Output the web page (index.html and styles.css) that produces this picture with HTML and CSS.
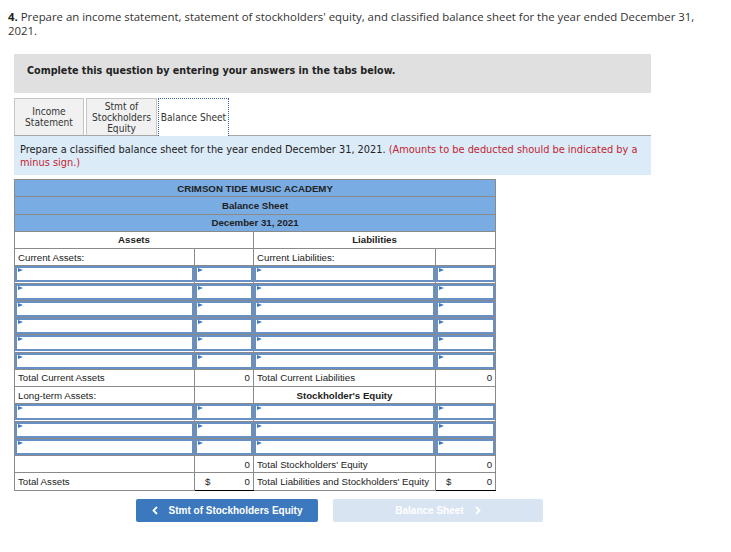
FILE: index.html
```html
<!DOCTYPE html>
<html lang="en">
<head>
<meta charset="utf-8">
<title>Balance Sheet</title>
<link rel="stylesheet" href="styles.css">
</head>
<body>
<p class="question"><b>4.</b> Prepare an income statement, statement of stockholders' equity, and classified balance sheet for the year ended December 31,<br>2021.</p>

<div class="panel">
  <div class="complete">Complete this question by entering your answers in the tabs below.</div>
  <div class="tabs">
    <div class="tab tab-income">Income<br>Statement</div>
    <div class="tab tab-stmt">Stmt of<br>Stockholders<br>Equity</div>
    <div class="tab tab-active">Balance Sheet</div>
  </div>
  <div class="instr">Prepare a classified balance sheet for the year ended December 31, 2021. <span class="red">(Amounts to be deducted should be indicated by a<br>minus sign.)</span></div>
</div>

<table class="bs">
  <colgroup>
    <col class="c1"><col class="c2"><col class="c3"><col class="c4">
  </colgroup>
  <tr class="head"><td colspan="4">CRIMSON TIDE MUSIC ACADEMY</td></tr>
  <tr class="head"><td colspan="4">Balance Sheet</td></tr>
  <tr class="head"><td colspan="4">December 31, 2021</td></tr>
  <tr class="sect"><td colspan="2">Assets</td><td colspan="2">Liabilities</td></tr>
  <tr><td class="lbl">Current Assets:</td><td></td><td class="lbl">Current Liabilities:</td><td></td></tr>
  <tr><td class="in"><input class="field"></td><td class="in"><input class="field"></td><td class="in"><input class="field"></td><td class="in"><input class="field"></td></tr>
  <tr><td class="in"><input class="field"></td><td class="in"><input class="field"></td><td class="in"><input class="field"></td><td class="in"><input class="field"></td></tr>
  <tr><td class="in"><input class="field"></td><td class="in"><input class="field"></td><td class="in"><input class="field"></td><td class="in"><input class="field"></td></tr>
  <tr><td class="in"><input class="field"></td><td class="in"><input class="field"></td><td class="in"><input class="field"></td><td class="in"><input class="field"></td></tr>
  <tr><td class="in"><input class="field"></td><td class="in"><input class="field"></td><td class="in"><input class="field"></td><td class="in"><input class="field"></td></tr>
  <tr><td class="in"><input class="field"></td><td class="in"><input class="field"></td><td class="in"><input class="field"></td><td class="in"><input class="field"></td></tr>
  <tr><td class="lbl">Total Current Assets</td><td class="num sub">0</td><td class="lbl">Total Current Liabilities</td><td class="num sub">0</td></tr>
  <tr><td class="lbl">Long-term Assets:</td><td></td><td class="subhead">Stockholder's Equity</td><td></td></tr>
  <tr><td class="in"><input class="field"></td><td class="in"><input class="field"></td><td class="in"><input class="field"></td><td class="in"><input class="field"></td></tr>
  <tr><td class="in"><input class="field"></td><td class="in"><input class="field"></td><td class="in"><input class="field"></td><td class="in"><input class="field"></td></tr>
  <tr><td class="in"><input class="field"></td><td class="in"><input class="field"></td><td class="in"><input class="field"></td><td class="in"><input class="field"></td></tr>
  <tr><td class="lbl"></td><td class="num sub">0</td><td class="lbl">Total Stockholders' Equity</td><td class="num sub">0</td></tr>
  <tr><td class="lbl">Total Assets</td><td class="num total"><span class="cur">$</span>0</td><td class="lbl">Total Liabilities and Stockholders' Equity</td><td class="num total"><span class="cur">$</span>0</td></tr>
</table>

<div class="nav">
  <div class="btn btn-prev">
    <svg class="chev" width="6" height="9" viewBox="0 0 6 9"><path d="M5 1 L1.5 4.5 L5 8" fill="none" stroke="#fff" stroke-width="1.8"/></svg>
    <span>Stmt of Stockholders Equity</span>
  </div>
  <div class="btn btn-next">
    <span>Balance Sheet</span>
    <svg class="chev" width="6" height="9" viewBox="0 0 6 9"><path d="M1 1 L4.5 4.5 L1 8" fill="none" stroke="#fff" stroke-width="1.8"/></svg>
  </div>
</div>
</body>
</html>
```

FILE: styles.css
```css
body {
  margin: 0;
  background: #fff;
  color: #333;
  font-family: "Open Sans", Lato, sans-serif;
}

.question {
  margin: 0;
  padding: 10px 8px 0;
  font-size: 11.4px;
  line-height: 14px;
  color: #333;
}

.question b {
  color: #222;
}

.panel {
  margin: 16px 0 0 14px;
  width: 637px;
}

.complete {
  box-sizing: border-box;
  height: 39px;
  padding: 10px 0 0 13px;
  background: #e0e0e0;
  font-family: "DejaVu Sans Condensed", "DejaVu Sans", sans-serif;
  font-stretch: condensed;
  font-weight: bold;
  font-size: 10.7px;
  line-height: 13px;
  color: #222;
}

.tabs {
  display: flex;
  height: 37px;
  margin-top: 5px;
}

.tab {
  box-sizing: border-box;
  height: 37px;
  display: flex;
  align-items: center;
  justify-content: center;
  text-align: center;
  border: 1px solid #c6c6c6;
  border-bottom: none;
  background: #f1f1f1;
  font-family: "DejaVu Sans Condensed", "DejaVu Sans", sans-serif;
  font-stretch: condensed;
  font-size: 10.1px;
  line-height: 11px;
  color: #333;
}

.tab-income {
  width: 70px;
  margin-right: 2px;
}

.tab-stmt {
  width: 71px;
  margin-right: 1px;
}

.tab-active {
  width: 71px;
  height: 38px;
  background: #fff;
  border: 1px dotted #2f64b0;
  border-bottom: none;
  position: relative;
  z-index: 1;
}

.instr {
  box-sizing: border-box;
  height: 40px;
  padding: 7px 6px 0;
  background: #dcebf8;
  border-top: 1px solid #a8a8a8;
  font-family: "DejaVu Sans", sans-serif;
  font-size: 9.8px;
  line-height: 13px;
  color: #222;
}

.red {
  color: #c3242f;
}

.bs {
  margin: 4px 0 0 14px;
  width: 481px;
  border-collapse: collapse;
  table-layout: fixed;
  border: 1px solid #8a8a8a;
  font-family: "Liberation Sans", Arial, sans-serif;
  font-size: 9.7px;
  color: #222;
}

.c1 { width: 180px; }
.c2 { width: 59px; }
.c3 { width: 182px; }
.c4 { width: 60px; }

.bs td {
  height: 16.25px;
  padding: 0;
  border: 1px solid #8a8a8a;
  vertical-align: middle;
  white-space: nowrap;
}

.head td {
  background: #79ace2;
  text-align: center;
  font-weight: bold;
}

.sect td,
.bs td.subhead {
  text-align: center;
  font-weight: bold;
}

.bs td.lbl {
  padding-left: 3px;
}

.bs td.num {
  text-align: right;
  padding-right: 3px;
}

.bs td.sub {
  border-top: 1px solid #000;
}

.bs td.total {
  border-bottom: 1px solid #000;
}

.cur {
  float: left;
  margin-left: 10px;
}

.bs td.in {
  position: relative;
}

.bs td.in::before {
  content: "";
  position: absolute;
  left: 3px;
  top: 2px;
  border-left: 5px solid #3b79c6;
  border-top: 2px solid transparent;
  border-bottom: 2px solid transparent;
}

.field {
  display: block;
  box-sizing: border-box;
  width: 100%;
  height: 16px;
  margin: 0;
  padding: 0;
  border: 2px solid #6690c6;
  background: #fff;
  outline: none;
}

.nav {
  display: flex;
  gap: 15px;
  margin: 8px 0 0 136px;
}

.btn {
  box-sizing: border-box;
  height: 23px;
  display: flex;
  align-items: center;
  justify-content: center;
  gap: 11px;
  border-radius: 2px;
  font-family: "Liberation Sans", Arial, sans-serif;
  font-weight: bold;
  font-size: 10px;
  color: #fff;
}

.btn-prev {
  width: 182px;
  background: #3b78bd;
}

.btn-next {
  width: 210px;
  background: #d9e4f2;
}

.chev {
  display: block;
}
```
